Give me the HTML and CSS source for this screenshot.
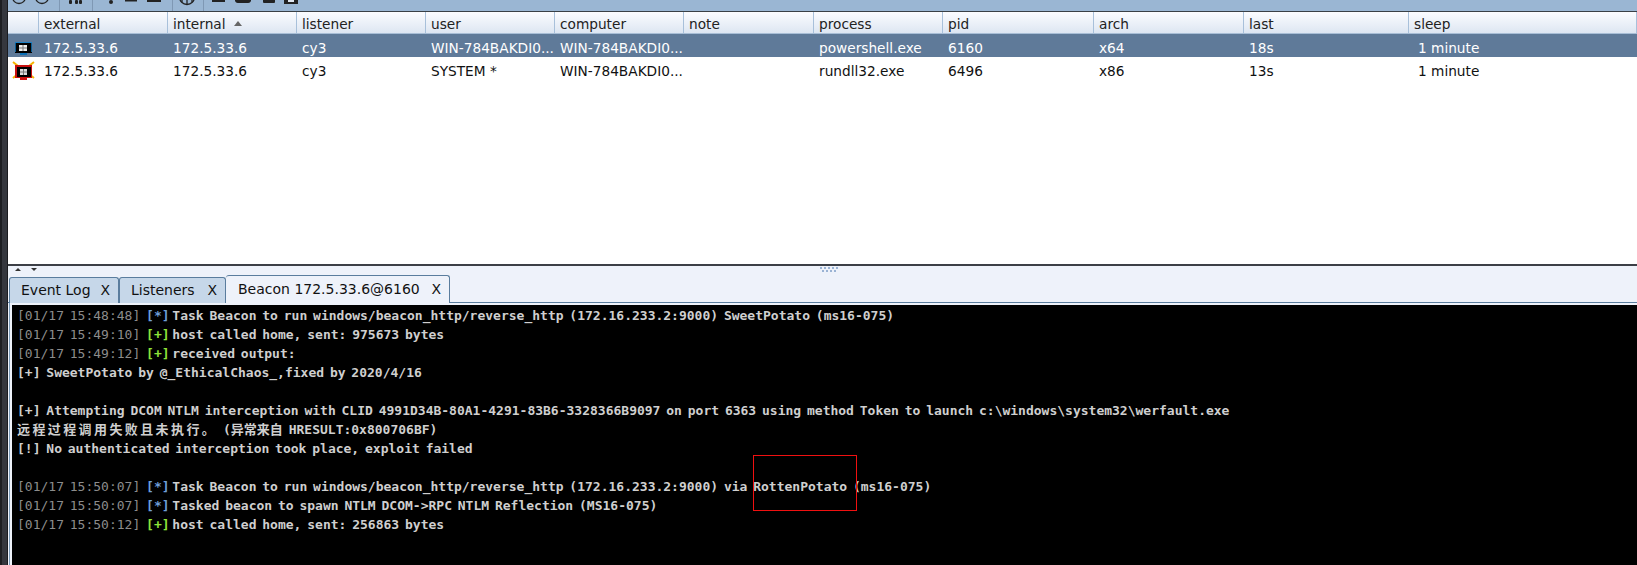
FILE: index.html
```html
<!DOCTYPE html>
<html lang="en">
<head>
<meta charset="utf-8">
<title>Cobalt Strike</title>
<link rel="stylesheet" href="styles.css">
</head>
<body>
<div class="edge"></div>
<main class="app">
  <div class="toolbar">
    <svg class="tools" width="320" height="11" viewBox="8 0 320 11">
      <g fill="none" stroke="#222" stroke-width="1.3">
        <circle cx="19" cy="-3" r="6.5"/><circle cx="42" cy="-3" r="6.5"/><circle cx="187" cy="-3" r="7.5"/>
        <path d="M187 -4v8M182 -2v4M192 -2v4"/>
      </g>
      <g stroke="#7f98b4"><path d="M59.500 0v11M92.500 0v11M172.500 0v11M203.500 0v11"/></g>
      <g fill="#222">
        <rect x="69" y="0" width="3" height="4" rx="1"/><rect x="75" y="0" width="3" height="4" rx="1"/><rect x="79" y="0" width="3" height="4" rx="1"/>
        <circle cx="111" cy="2" r="2"/><rect x="125" y="0" width="12" height="1.500"/><rect x="147" y="0" width="14" height="2"/>
        <rect x="212" y="0" width="13" height="2"/><path d="M235 0h16v1a3 3 0 0 1-3 2h-10a3 3 0 0 1-3-2z"/><path d="M263 0h12v2a1 1 0 0 1-1 1h-10a1 1 0 0 1-1-1z"/>
        <rect x="284" y="0" width="14" height="4"/>
      </g>
      <rect x="288" y="0" width="6" height="2" fill="#dfe6ef"/>
    </svg>
  </div>
  <section class="table">
    <div class="row head">
      <div class="c c0"></div><div class="c">external</div><div class="c">internal<span class="sort"></span></div><div class="c">listener</div><div class="c">user</div><div class="c">computer</div><div class="c">note</div><div class="c">process</div><div class="c">pid</div><div class="c">arch</div><div class="c">last</div><div class="c">sleep</div>
    </div>
    <div class="row sel">
      <div class="c c0"><svg class="ic" width="31" height="23" viewBox="0 0 31 23"><rect x="7" y="8" width="17" height="1" fill="#1b7fc4"/><rect x="7" y="9" width="17" height="10" fill="#000"/><rect x="7" y="9" width="1" height="9" fill="#0b5f95"/><rect x="23" y="9" width="1" height="9" fill="#0b5f95"/><rect x="12" y="19" width="7" height="2" fill="#0b6fb5"/><rect x="11" y="11" width="8" height="6" fill="#eee"/><path d="M15 11v6M11 14h8" stroke="#777"/></svg></div>
      <div class="c">172.5.33.6</div><div class="c">172.5.33.6</div><div class="c">cy3</div><div class="c">WIN-784BAKDI0...</div><div class="c">WIN-784BAKDI0...</div><div class="c"></div><div class="c">powershell.exe</div><div class="c">6160</div><div class="c">x64</div><div class="c">18s</div><div class="c ind">1 minute</div>
    </div>
    <div class="row">
      <div class="c c0"><svg class="ic" width="31" height="23" viewBox="0 0 31 23"><path d="M5 5l5 4M26 5l-5 4M5 21l5-4M26 21l-5-4" stroke="#f5b400" stroke-width="2"/><rect x="7" y="8" width="17" height="13" fill="#c81010"/><rect x="9" y="10" width="14" height="10" fill="#000"/><rect x="12" y="21" width="7" height="2" fill="#d01010"/><rect x="12" y="12" width="7" height="6" fill="#ddd"/><path d="M15.500 12v6M12 15h7" stroke="#777"/></svg></div>
      <div class="c">172.5.33.6</div><div class="c">172.5.33.6</div><div class="c">cy3</div><div class="c">SYSTEM *</div><div class="c">WIN-784BAKDI0...</div><div class="c"></div><div class="c">rundll32.exe</div><div class="c">6496</div><div class="c">x86</div><div class="c">13s</div><div class="c ind">1 minute</div>
    </div>
  </section>
  <div class="divider">
    <span class="arrows"><i class="up"></i><i class="down"></i></span>
    <span class="grip"></span>
  </div>
  <nav class="tabs">
    <div class="tab tab-a">Event Log<span class="x">X</span></div>
    <div class="tab tab-b">Listeners<span class="x">X</span></div>
    <div class="tab on">Beacon 172.5.33.6@6160<span class="x">X</span></div>
  </nav>
  <div class="panel">
  <section class="console">
<div class="ln"><span class="t">[01/17 15:48:48]</span> <span class="b">[*]</span> Task Beacon to run windows/beacon_http/reverse_http (172.16.233.2:9000) SweetPotato (ms16-075)</div>
<div class="ln"><span class="t">[01/17 15:49:10]</span> <span class="g">[+]</span> host called home, sent: 975673 bytes</div>
<div class="ln"><span class="t">[01/17 15:49:12]</span> <span class="g">[+]</span> received output:</div>
<div class="ln">[+] SweetPotato by @_EthicalChaos_,fixed by 2020/4/16</div>
<div class="ln"> </div>
<div class="ln">[+] Attempting DCOM NTLM interception with CLID 4991D34B-80A1-4291-83B6-3328366B9097 on port 6363 using method Token to launch c:\windows\system32\werfault.exe</div>
<div class="ln"><span class="cjk">远程过程调用失败且未执行。</span> (异常来自 HRESULT:0x800706BF)</div>
<div class="ln">[!] No authenticated interception took place, exploit failed</div>
<div class="ln"> </div>
<div class="ln"><span class="t">[01/17 15:50:07]</span> <span class="b">[*]</span> Task Beacon to run windows/beacon_http/reverse_http (172.16.233.2:9000) via RottenPotato (ms16-075)</div>
<div class="ln"><span class="t">[01/17 15:50:07]</span> <span class="b">[*]</span> Tasked beacon to spawn NTLM DCOM-&gt;RPC NTLM Reflection (MS16-075)</div>
<div class="ln"><span class="t">[01/17 15:50:12]</span> <span class="g">[+]</span> host called home, sent: 256863 bytes</div>
    <div class="mark"></div>
  </section>
  </div>
</main>
</body>
</html>
```

FILE: styles.css
```css
* { box-sizing: border-box; }
html, body { margin: 0; height: 100%; overflow: hidden; }
body { display: flex; width: 1637px; height: 565px; background: #eef2fa; font-family: "DejaVu Sans", sans-serif; }
.edge { width: 8px; flex: none; background: #35373e; border-left: 2px solid #1d1e22; border-right: 1px solid #1b1c20; }
.app { flex: 1; display: flex; flex-direction: column; min-width: 0; }
.toolbar { height: 12px; flex: none; background: #9ab6d3; border-bottom: 1px solid #3a4046; overflow: hidden; }
.tools { display: block; }
.table { height: 252px; flex: none; background: #fff; }
.row { display: grid; grid-template-columns: 31px 129px 129px 129px 129px 129px 130px 129px 151px 150px 165px 1fr; height: 23px; font-size: 13.7px; line-height: 23px; color: #111; }
.row .c { padding-top: 3px; }
.row .c0 { padding: 0; }
.head { height: 22px; background: linear-gradient(#fbfcff, #dde6f2); border-bottom: 1px solid #a8bed6; color: #222; }
.head .c { border-right: 1px solid #a8c0da; padding-top: 0; line-height: 24px; }
.c { padding-left: 5px; white-space: nowrap; overflow: hidden; }
.ic { display: block; }
.sel { background: #5f7a99; color: #fff; }
.row .ind { padding-left: 9px; }
.sort { display: inline-block; width: 0; height: 0; margin: 0 0 3px 8px; border: 4px solid transparent; border-top: 0; border-bottom: 5px solid #666; }
.divider { height: 11px; flex: none; border-top: 2px solid #3c3f46; display: flex; padding-left: 7px; }
.arrows { display: flex; gap: 10px; padding-top: 2px; }
.arrows i { display: block; width: 0; height: 0; border: 3px solid transparent; }
.arrows .up { border-top: 0; border-bottom: 3px solid #333; }
.arrows .down { border-bottom: 0; border-top: 3px solid #333; }
.grip { width: 18px; height: 5px; margin: 1px 0 0 783px; opacity: .75; background-image: repeating-linear-gradient(90deg, #7f9fc8 0 2px, transparent 2px 4px), repeating-linear-gradient(90deg, transparent 0 2px, #7f9fc8 2px 4px); background-size: 100% 2px, 100% 2px; background-position: 0 0, 0 3px; background-repeat: no-repeat; }
.tabs { height: 28px; flex: none; display: flex; align-items: flex-end; padding-left: 1px; border-bottom: 1px solid #5a7d9e; }
.tab { height: 26px; padding: 4px 8px 0 11px; font-size: 14px; line-height: 17px; color: #111; background: #c6d7e9; border: 1px solid #5a7d9e; border-bottom: 0; border-radius: 3px 3px 0 0; display: flex; justify-content: space-between; white-space: nowrap; margin-bottom: -1px; }
.tab-a { width: 110px; }
.tab-b { width: 107px; }
.tab.on { background: #eef2fa; height: 28px; width: 224px; padding: 5px 8px 0 12px; border-left: 0; }
.panel { flex: 1; min-height: 0; display: flex; margin-left: 1px; padding: 2px 0 0 2px; border-left: 1px solid #7a9ab8; }
.console { position: relative; flex: 1; padding: 1px 0 0 5px; background: #000; color: #cfcfcf; font: bold 13px/19px "DejaVu Sans Mono", "Noto Sans CJK SC", monospace; word-spacing: -2px; overflow: hidden; }
.ln { height: 19px; white-space: pre; }
.t { color: #8c8c8c; font-weight: normal; }
.b { color: #6f9fd8; margin-right: -3px; }
.g { color: #8fe43a; margin-right: -3px; }
.cjk { letter-spacing: 2.4px; }
.mark { position: absolute; left: 741px; top: 150px; width: 104px; height: 56px; border: 1px solid #f01010; }
```
